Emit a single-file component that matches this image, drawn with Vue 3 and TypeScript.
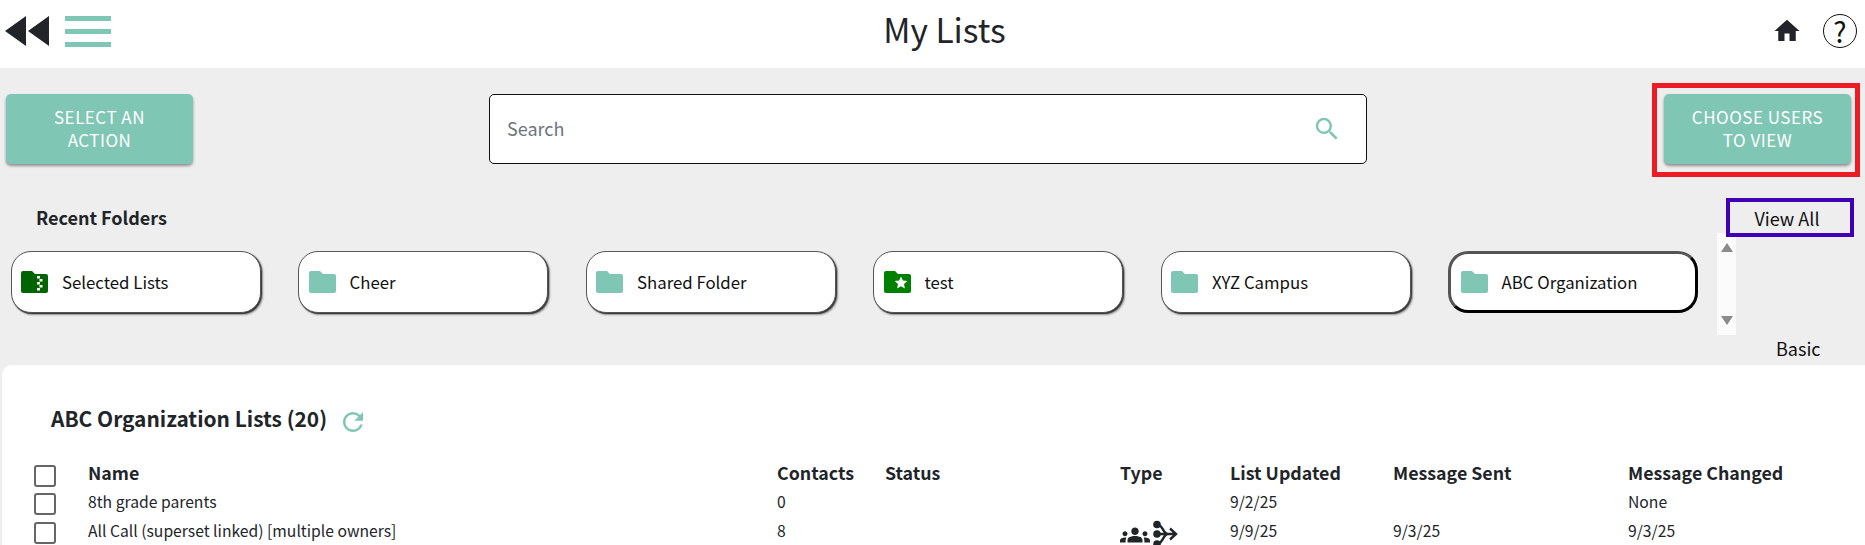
<script setup lang="ts">
interface Folder { name: string; kind: 'plain' | 'dots' | 'star'; active?: boolean }
interface Row { name: string; contacts: string; status: string; merge: boolean; updated: string; sent: string; changed: string }

const folders: Folder[] = [
  { name: 'Selected Lists', kind: 'dots' },
  { name: 'Cheer', kind: 'plain' },
  { name: 'Shared Folder', kind: 'plain' },
  { name: 'test', kind: 'star' },
  { name: 'XYZ Campus', kind: 'plain' },
  { name: 'ABC Organization', kind: 'plain', active: true },
]
const columns: string[] = ['Name', 'Contacts', 'Status', 'Type', 'List Updated', 'Message Sent', 'Message Changed']
const rows: Row[] = [
  { name: '8th grade parents', contacts: '0', status: '', merge: false, updated: '9/2/25', sent: '', changed: 'None' },
  { name: 'All Call (superset linked) [multiple owners]', contacts: '8', status: '', merge: true, updated: '9/9/25', sent: '9/3/25', changed: '9/3/25' },
]
</script>

<template>
  <div class="page">
    <header class="header">
      <div class="header-left">
        <svg class="back" width="44" height="30" viewBox="0 0 44 30"><path d="M0 15 21 0v30zM23 15 44 0v30z" /></svg>
        <div class="burger"><span></span><span></span><span></span></div>
      </div>
      <h1 class="title">My Lists</h1>
      <div class="header-right">
        <svg class="home" width="30" height="30" viewBox="0 0 24 24"><path d="M10 20v-6h4v6h5v-8h3L12 3 2 12h3v8z" /></svg>
        <div class="help">?</div>
      </div>
    </header>

    <section class="toolbar">
      <button class="action">Select an<br />Action</button>
      <div class="search">
        <span class="search-text">Search</span>
        <svg class="search-icon" width="30" height="30" viewBox="0 0 24 24"><path d="M15.500 14h-.790l-.280-.270A6.470 6.470 0 0 0 16 9.500 6.500 6.500 0 1 0 9.500 16c1.610 0 3.090-.590 4.230-1.570l.270.280v.790l5 4.990L20.490 19l-4.990-5zm-6 0C7.010 14 5 11.990 5 9.500S7.010 5 9.500 5 14 7.010 14 9.500 11.990 14 9.500 14z" /></svg>
      </div>
      <div class="red-box"><button class="action">Choose Users<br />to View</button></div>
    </section>

    <section class="recent">
      <div class="recent-main">
        <h2 class="recent-title">Recent Folders</h2>
        <div class="cards">
          <div v-for="f in folders" :key="f.name" class="card" :class="{ active: f.active }">
            <svg class="folder" :class="f.kind" width="27" height="22" viewBox="0 0 27 22">
              <path d="M2 0h9l3 3h11a2 2 0 0 1 2 2v15a2 2 0 0 1-2 2H2a2 2 0 0 1-2-2V2a2 2 0 0 1 2-2z" />
              <g v-if="f.kind === 'dots'" class="mark">
                <rect x="16" y="5" width="3" height="2.500" /><rect x="18.500" y="8" width="3" height="2.500" />
                <rect x="16" y="11" width="3" height="2.500" /><rect x="18.500" y="14" width="3" height="2.500" />
                <rect x="16" y="17" width="3" height="2.500" />
              </g>
              <path v-if="f.kind === 'star'" class="mark" d="M17 5.500l1.900 4 4.400.5-3.300 3 .9 4.400-3.900-2.200-3.900 2.200.9-4.400-3.300-3 4.400-.5z" />
            </svg>
            <span class="card-name">{{ f.name }}</span>
          </div>
        </div>
      </div>
      <div class="scroller">
        <span class="arrow up"></span>
        <span class="arrow down"></span>
      </div>
      <div class="recent-side">
        <div class="view-all">View All</div>
        <div class="basic">Basic</div>
      </div>
    </section>

    <main class="panel">
      <div class="panel-head">
        <h2 class="panel-title">ABC Organization Lists (20)</h2>
        <svg class="refresh" width="30" height="30" viewBox="0 0 24 24"><path d="M17.650 6.350A7.958 7.958 0 0 0 12 4c-4.420 0-7.990 3.580-7.990 8s3.570 8 7.990 8c3.730 0 6.840-2.550 7.730-6h-2.080A5.990 5.990 0 0 1 12 18c-3.310 0-6-2.690-6-6s2.690-6 6-6c1.660 0 3.140.690 4.220 1.780L13 11h7V4l-2.350 2.350z" /></svg>
      </div>
      <div class="table">
        <div class="check-cell head"><span class="check"></span></div>
        <div v-for="c in columns" :key="c" class="th">{{ c }}</div>
        <template v-for="r in rows" :key="r.name">
          <div class="check-cell"><span class="check"></span></div>
          <div class="td">{{ r.name }}</div>
          <div class="td">{{ r.contacts }}</div>
          <div class="td">{{ r.status }}</div>
          <div class="td type-cell">
            <svg v-if="r.merge" class="type-icon" width="58" height="28" viewBox="0 0 58 28">
              <g transform="scale(1.25)">
                <path d="M12 12.750c1.630 0 3.070.390 4.240.900 1.080.480 1.760 1.560 1.760 2.730V18H6v-1.610c0-1.180.680-2.260 1.760-2.730 1.170-.520 2.610-.910 4.240-.910zM4 13c1.100 0 2-.900 2-2s-.900-2-2-2-2 .900-2 2 .900 2 2 2zm1.130 1.100c-.370-.060-.740-.100-1.130-.100-.990 0-1.930.210-2.780.580C.480 14.900 0 15.620 0 16.430V18h4.500v-1.610c0-.830.230-1.610.630-2.290zM20 13c1.100 0 2-.900 2-2s-.900-2-2-2-2 .900-2 2 .900 2 2 2zm4 3.430c0-.810-.480-1.530-1.220-1.850-.850-.370-1.790-.580-2.780-.580-.390 0-.760.040-1.130.100.400.680.630 1.460.630 2.290V18H24v-1.570zM12 6c1.660 0 3 1.340 3 3s-1.340 3-3 3-3-1.340-3-3 1.340-3 3-3z" />
              </g>
              <circle cx="37" cy="4.500" r="3.800" /><circle cx="37" cy="14" r="3.800" /><circle cx="37" cy="24" r="3.800" />
              <path class="merge-line" d="M37 4.500c6 0 6 9.500 11 9.500M37 24c6 0 6-10 11-10M37 14h19M50 8.500l6 5.500-6 5.500" />
            </svg>
          </div>
          <div class="td">{{ r.updated }}</div>
          <div class="td">{{ r.sent }}</div>
          <div class="td">{{ r.changed }}</div>
        </template>
      </div>
    </main>
  </div>
</template>

<style>
html, body { margin: 0; height: 545px; overflow: hidden; background: #eeeeee; }
</style>

<style scoped>
.page {
  width: 1865px;
  height: 545px;
  overflow: hidden;
  background: #eeeeee;
  color: #212529;
  font-family: "Noto Sans CJK SC", "Noto Sans", sans-serif;
}
.header {
  height: 68px;
  box-sizing: border-box;
  padding-bottom: 6px;
  background: #fff;
  display: grid;
  grid-template-columns: 1fr auto 1fr;
  align-items: center;
}
.header-left { display: flex; align-items: center; padding-left: 5px; gap: 16px; }
.back { fill: #212529; display: block; }
.burger { width: 46px; display: flex; flex-direction: column; gap: 8px; }
.burger span { height: 5px; background: #80c6b4; }
.title { margin: -4px 0 0 24px; font-size: 33.500px; font-weight: 400; line-height: 1; }
.header-right { display: flex; justify-content: flex-end; align-items: center; padding-right: 8px; gap: 21px; }
.home { fill: #212529; }
.help {
  width: 32px;
  height: 32px;
  border: 1.500px solid #111;
  border-radius: 50%;
  display: flex;
  align-items: center;
  justify-content: center;
  font-size: 28px;
  line-height: 1;
  color: #111;
}
.toolbar {
  height: 109px;
  display: flex;
  justify-content: space-between;
  align-items: flex-start;
  padding: 26px 6px 0 6px;
  box-sizing: border-box;
}
.action {
  width: 187px;
  height: 70px;
  border: 0;
  border-radius: 5px;
  background: #80c6b4;
  color: #fff;
  font: 400 17px/23px "Noto Sans CJK SC", "Noto Sans", sans-serif;
  letter-spacing: 0.5px;
  text-transform: uppercase;
  box-shadow: 0 2px 3px rgba(0, 0, 0, 0.4);
  padding: 0 0 2px;
}
.search {
  width: 878px;
  height: 70px;
  box-sizing: border-box;
  border: 1px solid #111;
  border-radius: 5px;
  background: #fff;
  display: flex;
  align-items: center;
  justify-content: space-between;
  margin-left: 11px;
  padding: 0 24px 2px 17px;
  fill: #80c6b4;
}
.search-icon { margin-top: 2px; }
.search-text { font-size: 18px; color: #6c757d; }
.red-box {
  border: 5px solid #ed1c24;
  padding: 6px 4px 8px 7px;
  margin: -11px -1px 0 0;
  height: 94px;
  box-sizing: border-box;
}
.recent { height: 188px; display: flex; align-items: flex-start; }
.recent-main { width: 1717px; flex: none; }
.recent-title {
  margin: 0;
  padding-left: 36px;
  font-size: 18px;
  font-weight: 700;
  height: 74px;
  box-sizing: border-box;
  padding-top: 27px;
  line-height: 26px;
}
.cards { display: flex; gap: 37.500px; padding-left: 10.500px; }
.card {
  width: 250px;
  height: 62px;
  flex: none;
  box-sizing: border-box;
  background: #fff;
  border: 1px solid #555;
  border-radius: 20px;
  box-shadow: 1px 1px 1px #333, 2px 2px 2px rgba(0, 0, 0, 0.35);
  display: flex;
  align-items: center;
  padding-left: 9.500px;
  gap: 14px;
  font-size: 16.800px;
  color: #111;
}
.card.active { border: 3px solid #555; border-bottom-color: #000; border-right-color: #000; box-shadow: none; padding-left: 9.500px; }
.folder { flex: none; fill: #80c6b4; margin-top: -1px; }
.folder.dots { fill: #006400; }
.folder.star { fill: #008000; }
.mark { fill: #fff; }
.scroller {
  width: 19px;
  height: 102px;
  margin-top: 56px;
  flex: none;
  background: #fbfbfb;
  display: flex;
  flex-direction: column;
  justify-content: space-between;
  align-items: center;
  padding: 10px 0;
  box-sizing: border-box;
}
.arrow { width: 0; height: 0; border-left: 6.500px solid transparent; border-right: 6.500px solid transparent; }
.arrow.up { border-bottom: 9px solid #8a8a8a; }
.arrow.down { border-top: 9px solid #8a8a8a; }
.recent-side { margin: 21px 0 0 -10px; width: 128px; position: relative; }
.view-all {
  height: 39px;
  box-sizing: border-box;
  border: 4.500px solid #3f00b5;
  display: flex;
  align-items: center;
  justify-content: center;
  padding-right: 6px;
  font-size: 18px;
  color: #111;
}
.basic { margin-top: 98px; padding-left: 50px; font-size: 18px; line-height: 26px; color: #111; }
.panel {
  margin-left: 2px;
  height: 180px;
  background: #fff;
  border-radius: 10px 0 0 0;
  overflow: hidden;
}
.panel-head { display: flex; align-items: center; height: 97px; box-sizing: border-box; padding: 8px 0 0 49px; gap: 11px; }
.panel-title { margin: 0; font-size: 20.900px; font-weight: 700; }
.refresh { fill: #80c6b4; margin-top: 8px; }
.table {
  display: grid;
  grid-template-columns: 86px 689px 108px 235px 110px 163px 235px 1fr;
  grid-template-rows: 29px 28.500px 28px;
  font-size: 15.700px;
}
.check-cell { padding: 0 0 2px 32px; display: flex; align-items: center; }
.check {
  width: 22px;
  height: 22px;
  box-sizing: border-box;
  border: 2px solid #666;
  border-radius: 3px;
  background: #fff;
}
.th { font-size: 17.800px; font-weight: 700; line-height: 20px; }
.td { line-height: 22px; color: #212529; white-space: nowrap; }
.type-icon { display: block; fill: #212529; }
.merge-line { fill: none; stroke: #212529; stroke-width: 2.400; }
</style>
